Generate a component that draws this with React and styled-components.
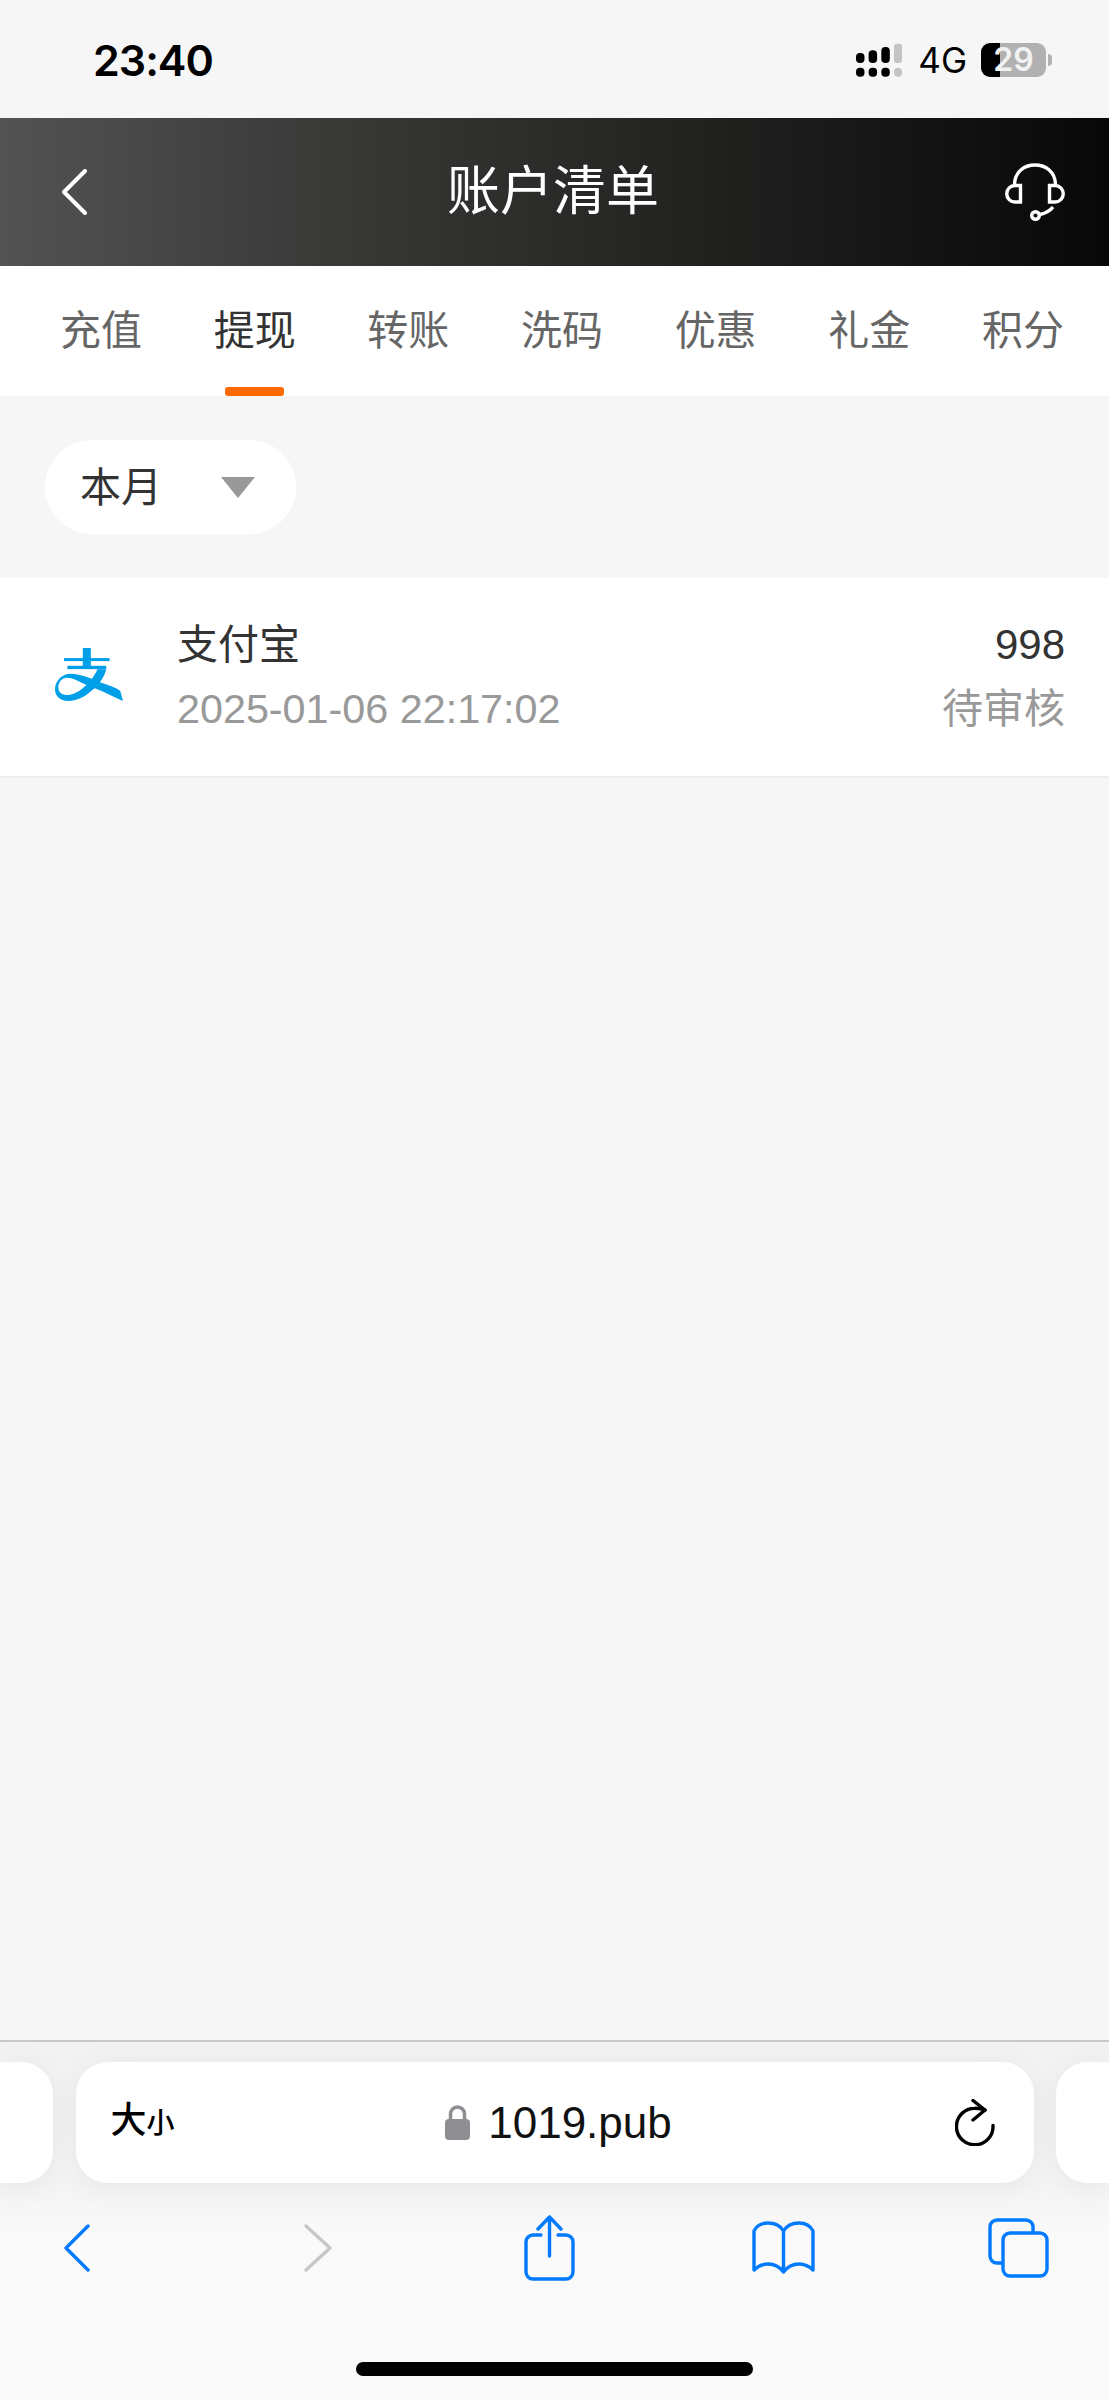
import styled, { createGlobalStyle } from "styled-components";

const tabs = ["充值", "提现", "转账", "洗码", "优惠", "礼金", "积分"];

const GlobalStyle = createGlobalStyle`
  html, body {
    margin: 0;
    padding: 0;
    background: #f6f6f6;
  }

  * {
    box-sizing: border-box;
  }
`;

const App = () => {
  return (
    <Page>
      <GlobalStyle />
      <StatusBar>
        <Clock>23:40</Clock>
        <StatusRight>
          <svg width="46" height="34" viewBox="0 0 46 34">
            <g fill="#000">
              <rect x="0" y="10" width="8.5" height="10" rx="4" />
              <rect x="12.6" y="7.3" width="8.5" height="12.7" rx="4" />
              <rect x="25.3" y="4" width="8.5" height="16" rx="4" />
              <rect x="0" y="24.7" width="8.5" height="9" rx="4" />
              <rect x="12.6" y="24.7" width="8.5" height="9" rx="4" />
              <rect x="25.3" y="24.7" width="8.5" height="9" rx="4" />
            </g>
            <g fill="#c4c4c4">
              <rect x="38" y="0.7" width="8" height="19.3" rx="3" />
              <rect x="38" y="24.7" width="8" height="9" rx="4" />
            </g>
          </svg>
          <Network>4G</Network>
          <Battery>29</Battery>
        </StatusRight>
      </StatusBar>

      <Header>
        <svg width="26" height="46" viewBox="0 0 26 46">
          <path d="M24 2 3 23l21 21" fill="none" stroke="#fff" strokeWidth="4" strokeLinecap="round" strokeLinejoin="round" />
        </svg>
        <Title>账户清单</Title>
        <svg width="60" height="58" viewBox="0 0 60 58" fill="none" stroke="#fff" strokeWidth="3.4">
          <path d="M9.500 21C10 9 19 2 30 2s20 7 20.500 19" />
          <path d="M15.500 22.500H10a8.200 8.200 0 0 0 0 16.500h5.500z" />
          <path d="M44.500 22.500H50a8.200 8.200 0 0 1 0 16.500h-5.500z" />
          <path d="M48 44c-3 4-7 6-13 7.500" />
          <circle cx="30.500" cy="52.500" r="3.800" />
        </svg>
      </Header>

      <TabBar>
        {tabs.map((tab, i) => (
          <Tab key={tab} $active={i === 1}>
            {tab}
          </Tab>
        ))}
      </TabBar>

      <Content>
        <Filter>
          <FilterLabel>本月</FilterLabel>
          <Caret />
        </Filter>

        <Record>
          <svg width="68" height="53" viewBox="105 145 203 158">
            <g fill="#00a0e9">
              <rect x="188" y="145" width="24" height="60" />
              <rect x="132" y="175" width="136" height="9" />
              <rect x="142" y="198" width="116" height="10" />
              <path d="M232 208h26c-5 22-20 44-43 64-22 20-46 31-70 31-26 0-40-16-40-34 0-28 24-47 45-47 35 0 65 17 100 29 24 8 40 14 50 22l8 30c-20-8-60-30-93-41-25-8-51-28-75-28-14 0-26 14-25 31 1 13 12 20 25 20 32 0 72-34 92-77z" />
            </g>
          </svg>
          <RecordInfo>
            <RecordName>支付宝</RecordName>
            <RecordTime>2025-01-06 22:17:02</RecordTime>
          </RecordInfo>
          <RecordRight>
            <RecordAmount>998</RecordAmount>
            <RecordState>待审核</RecordState>
          </RecordRight>
        </Record>
      </Content>

      <Browser>
        <AddressRow>
          <SidePill $side="left" />
          <Address>
            <FontSize>
              大<small>小</small>
            </FontSize>
            <Url>
              <svg width="25" height="35" viewBox="0 0 25 35">
                <path d="M5.500 15V8.900a7 7 0 0 1 14 0V15" fill="none" stroke="#8e8e93" strokeWidth="3.500" />
                <rect x="0" y="14" width="25" height="21" rx="4" fill="#8e8e93" />
              </svg>
              1019.pub
            </Url>
            <svg width="41" height="47" viewBox="0 0 41 47" fill="none" stroke="#000" strokeWidth="3.400" strokeLinecap="round" strokeLinejoin="round">
              <path d="M38 26.500A18.300 18.300 0 1 1 19.700 9.200Q25 9 30 11" />
              <path d="M18 1.500 30 11 18 21" />
            </svg>
          </Address>
          <SidePill $side="right" />
        </AddressRow>

        <Toolbar>
          <svg width="26" height="48" viewBox="0 0 26 48">
            <path d="M24 2 2 24l22 22" fill="none" stroke="#007aff" strokeWidth="3.400" strokeLinecap="round" strokeLinejoin="round" />
          </svg>
          <ToolSlot $gap={214}>
            <svg width="28" height="48" viewBox="0 0 28 48">
              <path d="M2 2l24 22L2 46" fill="none" stroke="#c7c7c7" strokeWidth="3.400" strokeLinecap="round" strokeLinejoin="round" />
            </svg>
          </ToolSlot>
          <ToolSlot $gap={192}>
            <svg width="51" height="66" viewBox="0 0 51 66" fill="none" stroke="#007aff" strokeWidth="3.400" strokeLinecap="round" strokeLinejoin="round">
              <path d="M17 20H9a7 7 0 0 0-7 7v30a7 7 0 0 0 7 7h33a7 7 0 0 0 7-7V27a7 7 0 0 0-7-7h-8" />
              <path d="M25.500 41V2M14 14 25.500 2 37 14" />
            </svg>
          </ToolSlot>
          <ToolSlot $gap={177}>
            <svg width="63" height="54" viewBox="0 0 63 54" fill="none" stroke="#007aff" strokeWidth="3.400" strokeLinecap="round" strokeLinejoin="round">
              <path d="M31.500 10C28 4 22 2 16 2S5 4 2 10v39c4-4 9-6 14-6s11 2 15.500 8c4.500-6 10-8 15.500-8s10 2 14 6V10c-3-6-8-8-14-8s-12 2-15.500 8zM31.500 10v41" />
            </svg>
          </ToolSlot>
          <ToolSlot $gap={173}>
            <svg width="61" height="60" viewBox="0 0 61 60" fill="none" stroke="#007aff" strokeWidth="3.400" strokeLinejoin="round">
              <path d="M45 15v-6a7 7 0 0 0-7-7H9a7 7 0 0 0-7 7v29a7 7 0 0 0 7 7h6" />
              <rect x="15" y="15" width="44" height="43" rx="7" />
            </svg>
          </ToolSlot>
        </Toolbar>

        <HomeBar />
      </Browser>
    </Page>
  );
};

export default App;

const Page = styled.div`
  display: flex;
  flex-direction: column;
  width: 1109px;
  height: 2400px;
  overflow: hidden;
  background: #f6f6f6;
  font-family: "Liberation Sans", "Noto Sans CJK SC", sans-serif;
`;

const StatusBar = styled.div`
  display: flex;
  flex: 0 0 118px;
  justify-content: space-between;
  align-items: flex-start;
  padding: 43px 63px 0 93px;
`;

const Clock = styled.div`
  font-family: Inter, sans-serif;
  font-size: 43px;
  font-weight: 600;
  letter-spacing: -1px;
  line-height: 34px;
  color: #000;
`;

const StatusRight = styled.div`
  display: flex;
  align-items: center;
  height: 34px;
`;

const Network = styled.span`
  margin: 0 14px 0 16px;
  font-family: Inter, sans-serif;
  font-size: 35px;
  line-height: 34px;
  color: #000;
`;

const Battery = styled.div`
  position: relative;
  width: 65px;
  height: 34px;
  border-radius: 9px;
  background: linear-gradient(to right, #000 19px, #b1b1b1 19px);
  font-family: Inter, sans-serif;
  font-size: 32px;
  font-weight: 600;
  line-height: 34px;
  text-align: center;
  color: #f2f2f2;

  &::after {
    content: "";
    position: absolute;
    top: 11px;
    right: -6px;
    width: 4px;
    height: 12px;
    border-radius: 0 4px 4px 0;
    background: #b1b1b1;
  }
`;

const Header = styled.header`
  display: flex;
  flex: 0 0 148px;
  justify-content: space-between;
  align-items: center;
  padding: 0 44px 0 61px;
  background: linear-gradient(to right, #535353, #3c3b3a 27%, #1e1e1d 68%, #080808);
`;

const Title = styled.h1`
  margin: 0 0 0 14px;
  font-size: 53px;
  font-weight: 400;
  line-height: 60px;
  color: #fff;
`;

const TabBar = styled.nav`
  display: flex;
  flex: 0 0 130px;
  justify-content: space-between;
  padding: 0 45px 0 60px;
  background: #fff;
`;

const Tab = styled.div`
  position: relative;
  padding-top: 38px;
  font-size: 41px;
  line-height: 54px;
  color: ${(props) => (props.$active ? "#333" : "#666")};

  &::after {
    content: "";
    display: ${(props) => (props.$active ? "block" : "none")};
    position: absolute;
    left: 11px;
    right: 12px;
    bottom: 0;
    height: 9px;
    border-radius: 3px;
    background: #ff6a00;
  }
`;

const Content = styled.main`
  flex: 1;
  padding-top: 44px;
`;

const Filter = styled.div`
  display: flex;
  align-items: center;
  width: 251px;
  height: 94px;
  margin-left: 45px;
  padding-left: 35px;
  border-radius: 47px;
  background: #fff;
  color: #333;
`;

const FilterLabel = styled.span`
  margin-bottom: 6px;
  font-size: 41px;
`;

const Caret = styled.i`
  width: 0;
  height: 0;
  margin-left: 59px;
  border-top: 21px solid #999;
  border-left: 17px solid transparent;
  border-right: 17px solid transparent;
`;

const Record = styled.section`
  display: flex;
  align-items: center;
  height: 200px;
  margin-top: 44px;
  padding: 0 44px 0 55px;
  border-bottom: 2px solid #eeeeee;
  background: #fff;

  svg {
    margin-bottom: 5px;
  }
`;

const RecordInfo = styled.div`
  flex: 1;
  margin-left: 54px;
`;

const RecordName = styled.div`
  font-size: 41px;
  line-height: 54px;
  color: #333;
`;

const RecordAmount = styled.div`
  font-size: 42px;
  line-height: 54px;
  color: #333;
`;

const RecordTime = styled.div`
  margin-top: 10px;
  font-size: 41.3px;
  line-height: 54px;
  color: #999;
`;

const RecordRight = styled.div`
  text-align: right;
`;

const RecordState = styled.div`
  margin-top: 10px;
  font-size: 41px;
  line-height: 54px;
  color: #999;
`;

const Browser = styled.footer`
  flex: 0 0 360px;
  border-top: 2px solid #c9c9c9;
  background: linear-gradient(to bottom, #f2f2f2, #f4f4f4 40%, #fafafa 55%);
`;

const AddressRow = styled.div`
  display: flex;
  justify-content: space-between;
  margin-top: 20px;
`;

const SidePill = styled.div`
  flex: 0 0 53px;
  border-radius: ${(props) => (props.$side === "left" ? "0 32px 32px 0" : "32px 0 0 32px")};
  background: #fff;
  box-shadow: 0 4px 30px rgba(0, 0, 0, 0.06);
`;

const Address = styled.div`
  display: flex;
  flex: 0 0 958px;
  justify-content: space-between;
  align-items: center;
  height: 121px;
  padding: 0 38px 0 35px;
  border-radius: 32px;
  background: #fff;
  box-shadow: 0 4px 30px rgba(0, 0, 0, 0.06);
`;

const FontSize = styled.div`
  width: 66px;
  font-size: 36px;
  font-weight: 500;
  line-height: 44px;
  white-space: nowrap;
  color: #000;

  small {
    font-size: 28px;
  }
`;

const Url = styled.div`
  display: flex;
  align-items: center;
  gap: 18px;
  margin-right: 14px;
  font-size: 44px;
  line-height: 50px;
  color: #111;
`;

const Toolbar = styled.div`
  display: flex;
  align-items: center;
  height: 70px;
  margin-top: 30px;
  padding-left: 64px;
`;

const ToolSlot = styled.div`
  display: flex;
  margin-left: ${(props) => props.$gap}px;
`;

const HomeBar = styled.div`
  width: 397px;
  height: 14px;
  margin: 79px 0 0 356px;
  border-radius: 7px;
  background: #000;
`;
